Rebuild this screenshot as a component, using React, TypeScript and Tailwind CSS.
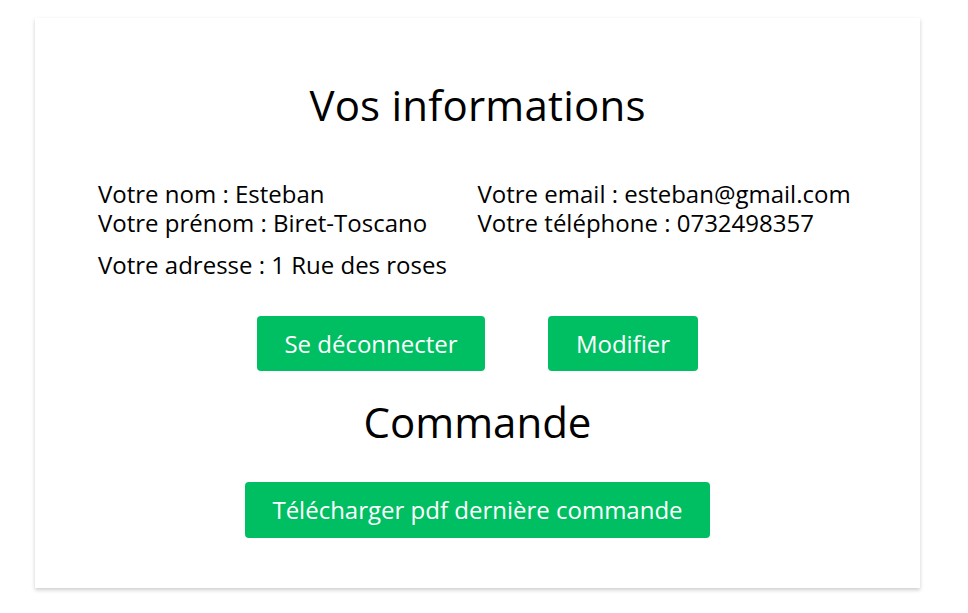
import React from "react";

export default function App() {
  return (
    <div className="min-h-[613px] bg-white pt-[18px] pl-[35px] pr-[48px]" style={{ fontFamily: '"Open Sans", "Noto Sans", sans-serif' }}>
      <div className="bg-white shadow-[0_2px_4px_rgba(0,0,0,0.2)] h-[570px] flex flex-col items-center text-black">
        <h1 className="mt-[62px] text-[42px] leading-[50px] tracking-[0.2px]">Vos informations</h1>
        <div className="mt-[49px] w-full px-[63px] grid grid-cols-2 text-[24px] leading-[29px]">
          <div>
            <p>Votre nom : Esteban</p>
            <p>Votre prénom : Biret-Toscano</p>
            <p className="mt-[13px]">Votre adresse : 1 Rue des roses</p>
          </div>
          <div>
            <p>Votre email : esteban@gmail.com</p>
            <p>Votre téléphone : 0732498357</p>
          </div>
        </div>
        <div className="mt-[37px] flex gap-[63px]">
          <button className="h-[55px] w-[228px] rounded-[4px] bg-[#00bf62] text-white text-[24px]">Se déconnecter</button>
          <button className="h-[55px] w-[150px] rounded-[4px] bg-[#00bf62] text-white text-[24px]">Modifier</button>
        </div>
        <h2 className="mt-[26px] text-[42px] leading-[50px]">Commande</h2>
        <button className="mt-[35px] h-[56px] w-[465px] rounded-[4px] bg-[#00bf62] text-white text-[24px]">Télécharger pdf dernière commande</button>
      </div>
    </div>
  );
}
